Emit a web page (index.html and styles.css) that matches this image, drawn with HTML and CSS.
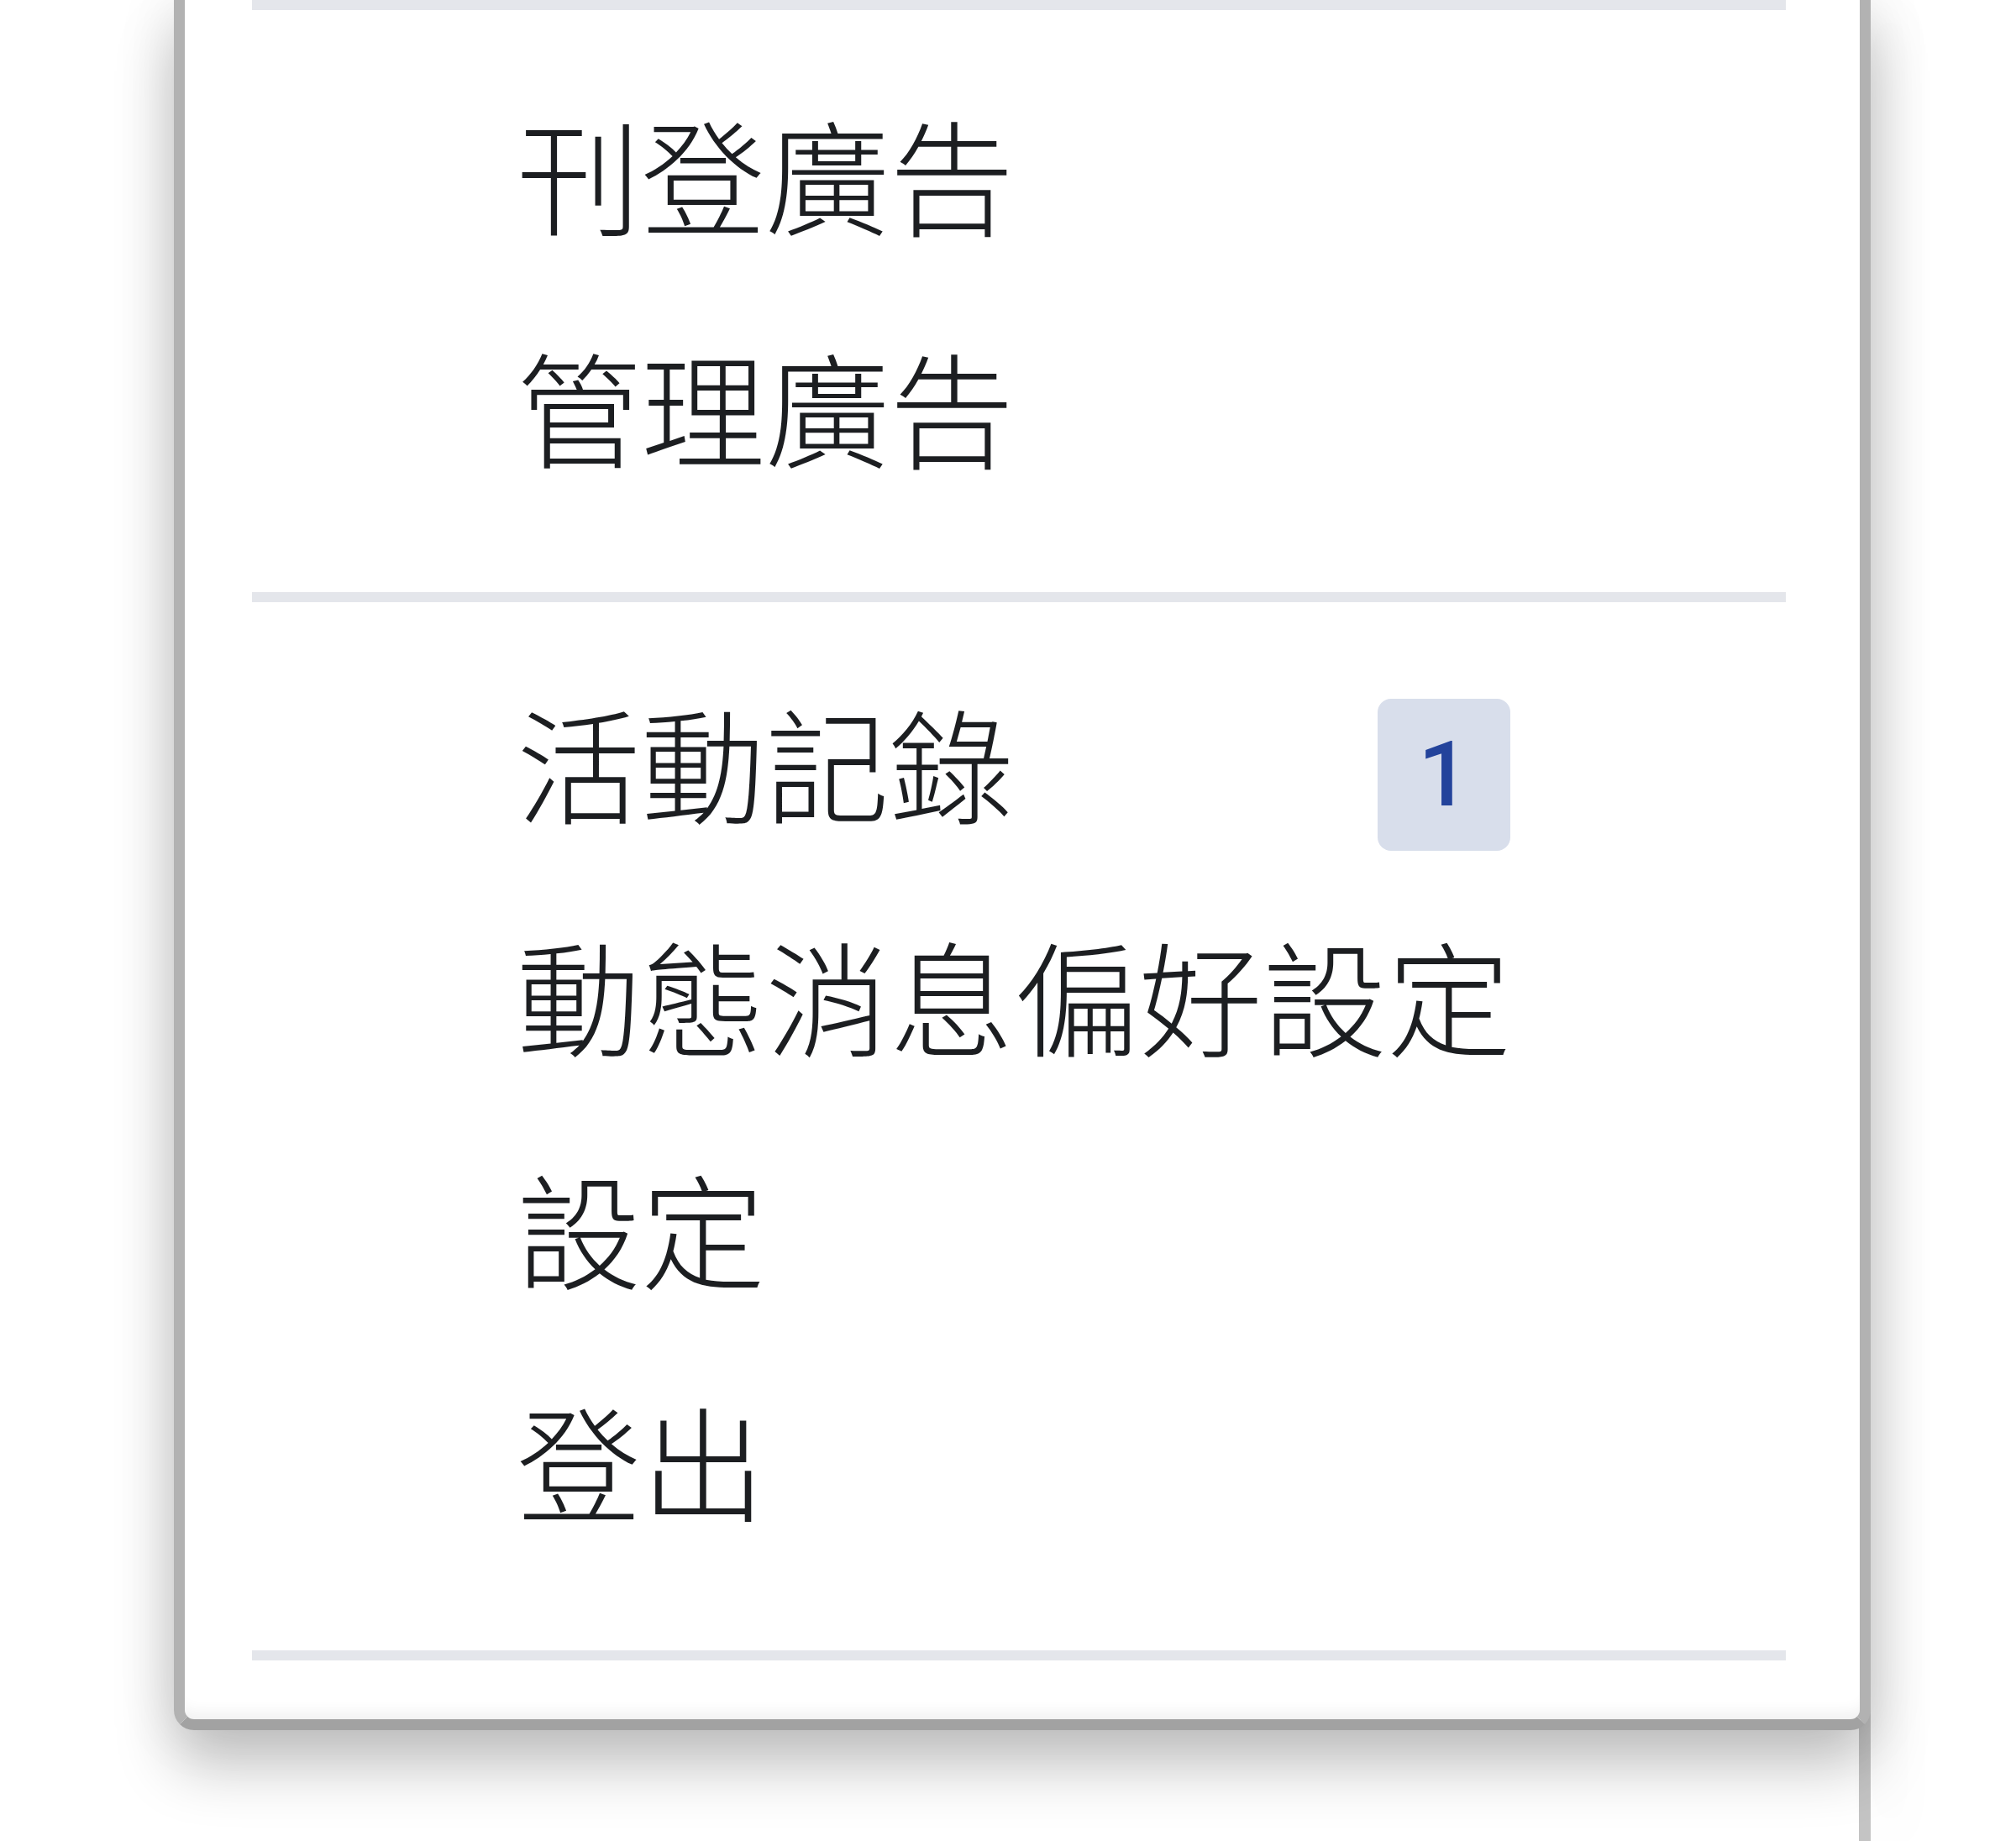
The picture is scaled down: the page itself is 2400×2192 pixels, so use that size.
FILE: index.html
```html
<!DOCTYPE html>
<html lang="zh-Hant">
<head>
<meta charset="utf-8">
<title>選單</title>
<link rel="stylesheet" href="styles.css">
</head>
<body>
<div class="page">
  <div class="panel">
    <div class="divider"></div>
    <div class="section section-ads">
      <div class="row"><span class="label">刊登廣告</span></div>
      <div class="row"><span class="label">管理廣告</span></div>
    </div>
    <div class="divider"></div>
    <div class="section section-main">
      <div class="row"><span class="label">活動記錄</span><span class="badge">1</span></div>
      <div class="row"><span class="label">動態消息偏好設定</span></div>
      <div class="row"><span class="label">設定</span></div>
      <div class="row"><span class="label">登出</span></div>
    </div>
    <div class="divider"></div>
    <div class="footer"></div>
  </div>
  <div class="rail"></div>
</div>
</body>
</html>
```

FILE: styles.css
```css
html, body {
  margin: 0;
  padding: 0;
  background: #ffffff;
}

body {
  font-family: "Noto Sans CJK TC", "Noto Sans", sans-serif;
  color: #1c1e21;
  overflow: hidden;
}

.page {
  display: flex;
  align-items: flex-start;
  height: 2192px;
  width: 2400px;
}

.panel {
  position: relative;
  z-index: 1;
  margin-left: 207px;
  width: 2020px;
  box-sizing: border-box;
  background: #ffffff;
  border: 13px solid #b2b2b2;
  border-top: none;
  border-bottom-color: #a2a2a2;
  border-radius: 0 0 24px 24px;
  box-shadow:
    inset 0 -22px 18px -14px rgba(0, 0, 0, 0.06),
    0 45px 70px rgba(0, 0, 0, 0.22),
    0 0 70px rgba(0, 0, 0, 0.10);
}

.divider {
  height: 12px;
  margin: 0 88px 0 80px;
  background: #e4e6eb;
}

.section-ads {
  padding: 54px 0 85px;
}

.section-main {
  padding: 50px 0 90px;
}

.row {
  display: flex;
  align-items: center;
  height: 277px;
  padding: 0 416px 0 395px;
}

.label {
  font-size: 148px;
  font-weight: 300;
  line-height: 277px;
  white-space: nowrap;
}

.badge {
  margin-left: auto;
  margin-top: 34px;
  width: 158px;
  height: 181px;
  border-radius: 16px;
  background: #d8deeb;
  color: #23439b;
  font-family: Roboto, "Liberation Sans", sans-serif;
  font-size: 108px;
  font-weight: 500;
  line-height: 181px;
  text-align: center;
}

.footer {
  height: 70px;
}

.rail {
  align-self: stretch;
  width: 14px;
  margin-left: -14px;
  background: #c4c4c4;
  box-shadow: 30px 0 60px rgba(0, 0, 0, 0.05);
}
```
